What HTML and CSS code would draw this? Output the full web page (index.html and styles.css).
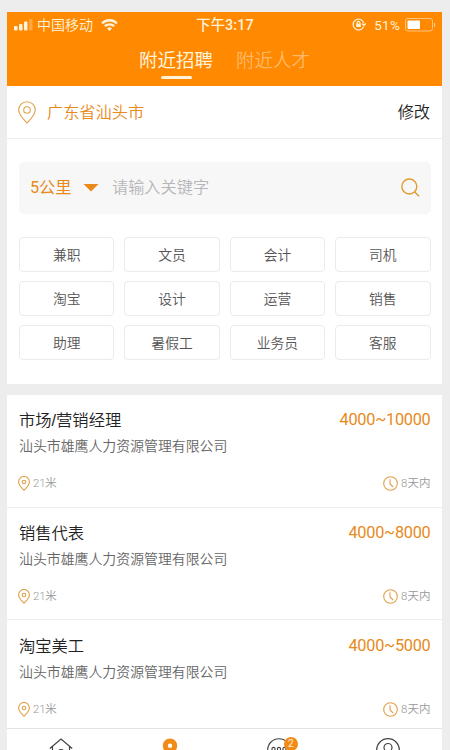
FILE: index.html
```html
<!DOCTYPE html>
<html lang="zh-CN">
<head>
<meta charset="utf-8">
<title>附近招聘</title>
<link rel="stylesheet" href="styles.css">
</head>
<body>
<svg class="defs" width="0" height="0">
  <symbol id="pin" viewBox="0 0 18 23"><path d="M9 22C5.500 18.200.7 13.800.7 9a8.300 8.300 0 0 1 16.600 0c0 4.800-4.800 9.200-8.300 13z"/><circle cx="9" cy="9" r="3.300"/></symbol>
  <symbol id="small-pin" viewBox="0 0 12 15"><path d="M6 14.200C3.500 11.500.6 9 .6 5.900a5.400 5.400 0 0 1 10.800 0c0 3.100-2.900 5.600-5.400 8.300z"/><circle cx="6" cy="6" r="1.800"/></symbol>
  <symbol id="clock" viewBox="0 0 15 15"><circle cx="7.500" cy="7.500" r="6.800"/><path d="M7 3.300v4.700l3.200 3"/></symbol>
</svg>
<div class="phone">
  <header>
    <div class="status">
      <div class="carrier">
        <svg width="19" height="12" fill="#fff3dc"><rect y="7" width="3.500" height="4.500" rx="1"/><rect x="5" y="5" width="3.500" height="6.500" rx="1"/><rect x="10" y="2.500" width="3.500" height="9" rx="1"/><rect x="15" y="0" width="3.500" height="11.500" rx="1" opacity=".3"/></svg>
        <span>中国移动</span>
        <svg class="wifi" width="17" height="12" viewBox="0 0 17 12" fill="none" stroke="#fff3dc" stroke-width="2.300"><path d="M1 4.300a10.800 10.800 0 0 1 15 0M3.800 7.200a6.800 6.800 0 0 1 9.400 0"/><path d="M6 9.400a3.600 3.600 0 0 1 5 0L8.500 12z" fill="#fff3dc" stroke="none"/></svg>
      </div>
      <div class="time">下午3:17</div>
      <div class="power">
        <svg width="14" height="13" viewBox="0 0 14 13" fill="none" stroke="#fff3dc" stroke-width="1.200"><path d="M11.600 8.600A5.400 5.400 0 1 1 11.800 5.200M10 5.500l2 2 1.700-2"/><rect x="4.200" y="5.700" width="4.600" height="3.300" fill="#fff3dc" stroke="none"/><path d="M5.100 6V4.800a1.400 1.400 0 0 1 2.800 0V6"/></svg>
        <span>51%</span>
        <svg width="31" height="14" fill="none"><rect x=".5" y=".5" width="27" height="12.500" rx="2.500" stroke="#ffc57d"/><rect x="2.500" y="2.500" width="12.500" height="8.500" rx=".8" fill="#fff"/><path d="M29.500 5v4" stroke="#ffc57d" stroke-width="1.300"/></svg>
      </div>
    </div>
    <nav class="tabs"><span class="tab active">附近招聘</span><span class="tab">附近人才</span></nav>
  </header>
  <div class="place">
    <svg class="line-icon" width="18" height="23"><use href="#pin"/></svg>
    <span class="city">广东省汕头市</span><span class="edit">修改</span>
  </div>
  <section class="finder">
    <div class="search">
      <span class="range">5公里</span><i class="caret"></i><span class="hint">请输入关键字</span>
      <svg width="19" height="19" fill="none" stroke="#e39a32" stroke-width="1.400"><circle cx="8.300" cy="8.500" r="7.500"/><path d="M13.500 13.800l4.500 4.500"/></svg>
    </div>
    <div class="tags"><span>兼职</span><span>文员</span><span>会计</span><span>司机</span><span>淘宝</span><span>设计</span><span>运营</span><span>销售</span><span>助理</span><span>暑假工</span><span>业务员</span><span>客服</span></div>
  </section>
  <main>
    <article>
      <div class="row"><h2>市场/营销经理</h2><b>4000~10000</b></div>
      <p>汕头市雄鹰人力资源管理有限公司</p>
      <div class="row meta"><span><svg width="12" height="15"><use href="#small-pin"/></svg>21米</span><span><svg width="15" height="15"><use href="#clock"/></svg>8天内</span></div>
    </article>
    <article>
      <div class="row"><h2>销售代表</h2><b>4000~8000</b></div>
      <p>汕头市雄鹰人力资源管理有限公司</p>
      <div class="row meta"><span><svg width="12" height="15"><use href="#small-pin"/></svg>21米</span><span><svg width="15" height="15"><use href="#clock"/></svg>8天内</span></div>
    </article>
    <article>
      <div class="row"><h2>淘宝美工</h2><b>4000~5000</b></div>
      <p>汕头市雄鹰人力资源管理有限公司</p>
      <div class="row meta"><span><svg width="12" height="15"><use href="#small-pin"/></svg>21米</span><span><svg width="15" height="15"><use href="#clock"/></svg>8天内</span></div>
    </article>
  </main>
  <footer>
    <div><svg width="24" height="24" fill="none" stroke="#444" stroke-width="1.200"><path d="M.8 10.500L12 1l11.200 9.500M3.500 8.500V22h17V8.500M9.500 22v-8a2.500 2.500 0 0 1 5 0v8"/></svg></div>
    <div><svg width="16" height="22"><path fill="#f28b16" fill-rule="evenodd" d="M8 .5a7.200 7.200 0 0 1 7.200 7.200C15.200 13 8 21 8 21S.8 13 .8 7.700A7.200 7.200 0 0 1 8 .5zM8 5.500a2.200 2.200 0 1 0 0 4.400 2.200 2.200 0 0 0 0-4.400z"/></svg></div>
    <div><span class="chat"><svg width="24" height="24" fill="none" stroke="#444" stroke-width="1.100"><circle cx="12" cy="12" r="11.300"/><circle cx="6.500" cy="11" r="1.600"/><circle cx="12" cy="11" r="1.600"/><circle cx="17.500" cy="11" r="1.600"/></svg><em>2</em></span></div>
    <div><svg width="24" height="24" fill="none" stroke="#444" stroke-width="1.200"><circle cx="12" cy="12" r="11.300"/><circle cx="12" cy="9.500" r="4"/><path d="M4 20c1-4 4-6 8-6s7 2 8 6"/></svg></div>
  </footer>
</div>
</body>
</html>
```
FILE: styles.css
```css
* { box-sizing: border-box; }
body {
  margin: 0;
  height: 750px;
  overflow: hidden;
  background: #ededed;
  font-family: Roboto, "Noto Sans CJK SC", sans-serif;
  font-weight: 350;
}
.defs { display: block; }
svg { flex: none; }
.phone { width: 435px; height: 738px; margin: 12px 0 0 7px; overflow: hidden; display: flex; flex-direction: column; }
header { height: 74px; flex: none; background: #ff8900; color: #fff3dc; }
.status {
  height: 24px;
  padding: 0 6px 0 7px;
  display: grid;
  grid-template-columns: 1fr auto 1fr;
  align-items: center;
  font-size: 14px;
  line-height: 24px;
  font-weight: 400;
}
.carrier, .power { display: flex; align-items: center; }
.carrier span { margin-left: 4px; font-weight: 350; }
.wifi { margin-left: 8px; }
.time { padding-top: 1px; font-size: 14.300px; font-weight: 500; letter-spacing: .1px; }
.power { justify-content: flex-end; }
.power span { margin: 0 5px 0 8px; font-size: 13.500px; letter-spacing: .2px; }
.tabs { display: flex; padding-left: 132px; gap: 23px; }
.tab { height: 44px; font-size: 18.500px; line-height: 51px; color: #ffb969; display: flex; flex-direction: column; align-items: center; }
.tab.active { color: #fff3dc; font-weight: 400; }
.tab.active::after { content: ""; flex: none; width: 31px; height: 3px; margin-top: -11px; border-radius: 2px; background: #fff3dc; }
.place { height: 53px; flex: none; display: flex; align-items: center; padding: 0 12px 0 11px; background: #fff; border-bottom: 1px solid #eee; font-size: 16.200px; }
.line-icon, .meta svg { fill: none; stroke: #e0a04a; stroke-width: 1.100; }
.city, .edit { padding-bottom: 2px; }
.city { margin-left: 11px; color: #e78a1b; }
.edit { margin-left: auto; color: #222; }
.finder { height: 244.500px; flex: none; padding: 22.500px 11.500px 0 12px; background: #fff; }
.search { height: 52px; display: flex; align-items: center; padding: 0 11px; border-radius: 5px; background: #f7f7f7; font-size: 16.200px; }
.range, .hint { padding-bottom: 3px; }
.range { width: 41px; white-space: nowrap; color: #e78a1b; font-weight: 400; }
.caret { width: 16px; height: 8px; margin: 0 13px 0 12px; background: #ea8a1b; clip-path: polygon(0 0, 100% 0, 50% 100%); }
.hint { flex: 1; color: #b6b6ba; }
.tags { display: grid; grid-template-columns: repeat(4, 1fr); grid-auto-rows: 35px; gap: 9px 10px; margin-top: 23px; }
.tags span { display: flex; align-items: center; justify-content: center; border: 1px solid #ebebeb; border-radius: 4px; color: #555; font-size: 13.800px; }
main { flex: none; height: 333px; margin-top: 11.500px; overflow: hidden; }
article { height: 112.700px; padding: 13.400px 11.500px 0 12px; background: #fff; border-bottom: 1px solid #ededed; }
.row { display: flex; align-items: center; justify-content: space-between; }
h2, .row b { margin: 0; font-size: 16.300px; line-height: 24px; font-weight: 350; color: #222; }
h2 { font-family: "Liberation Sans", "Noto Sans CJK SC", sans-serif; }
.row b { color: #e78a1b; font-weight: 400; letter-spacing: -.25px; }
p { margin: 4px 0 0; font-size: 13.900px; line-height: 20px; color: #666; }
.meta { margin-top: 19px; font-size: 11.500px; line-height: 17px; color: #999; }
.meta span { display: flex; align-items: center; gap: 3px; }
.meta span:first-child { margin-left: -1px; letter-spacing: -.2px; }
footer { flex: 1; display: grid; grid-template-columns: repeat(4, 1fr); padding-top: 9px; background: #fff; border-top: 1px solid #e2e2e2; }
footer div { display: flex; justify-content: center; }
.chat { position: relative; height: 24px; }
.chat em { position: absolute; left: 17px; top: -1px; width: 14px; height: 14px; border-radius: 50%; background: #f28b16; color: #fff3dc; font: 400 10px/14px Roboto, sans-serif; text-align: center; }
```
